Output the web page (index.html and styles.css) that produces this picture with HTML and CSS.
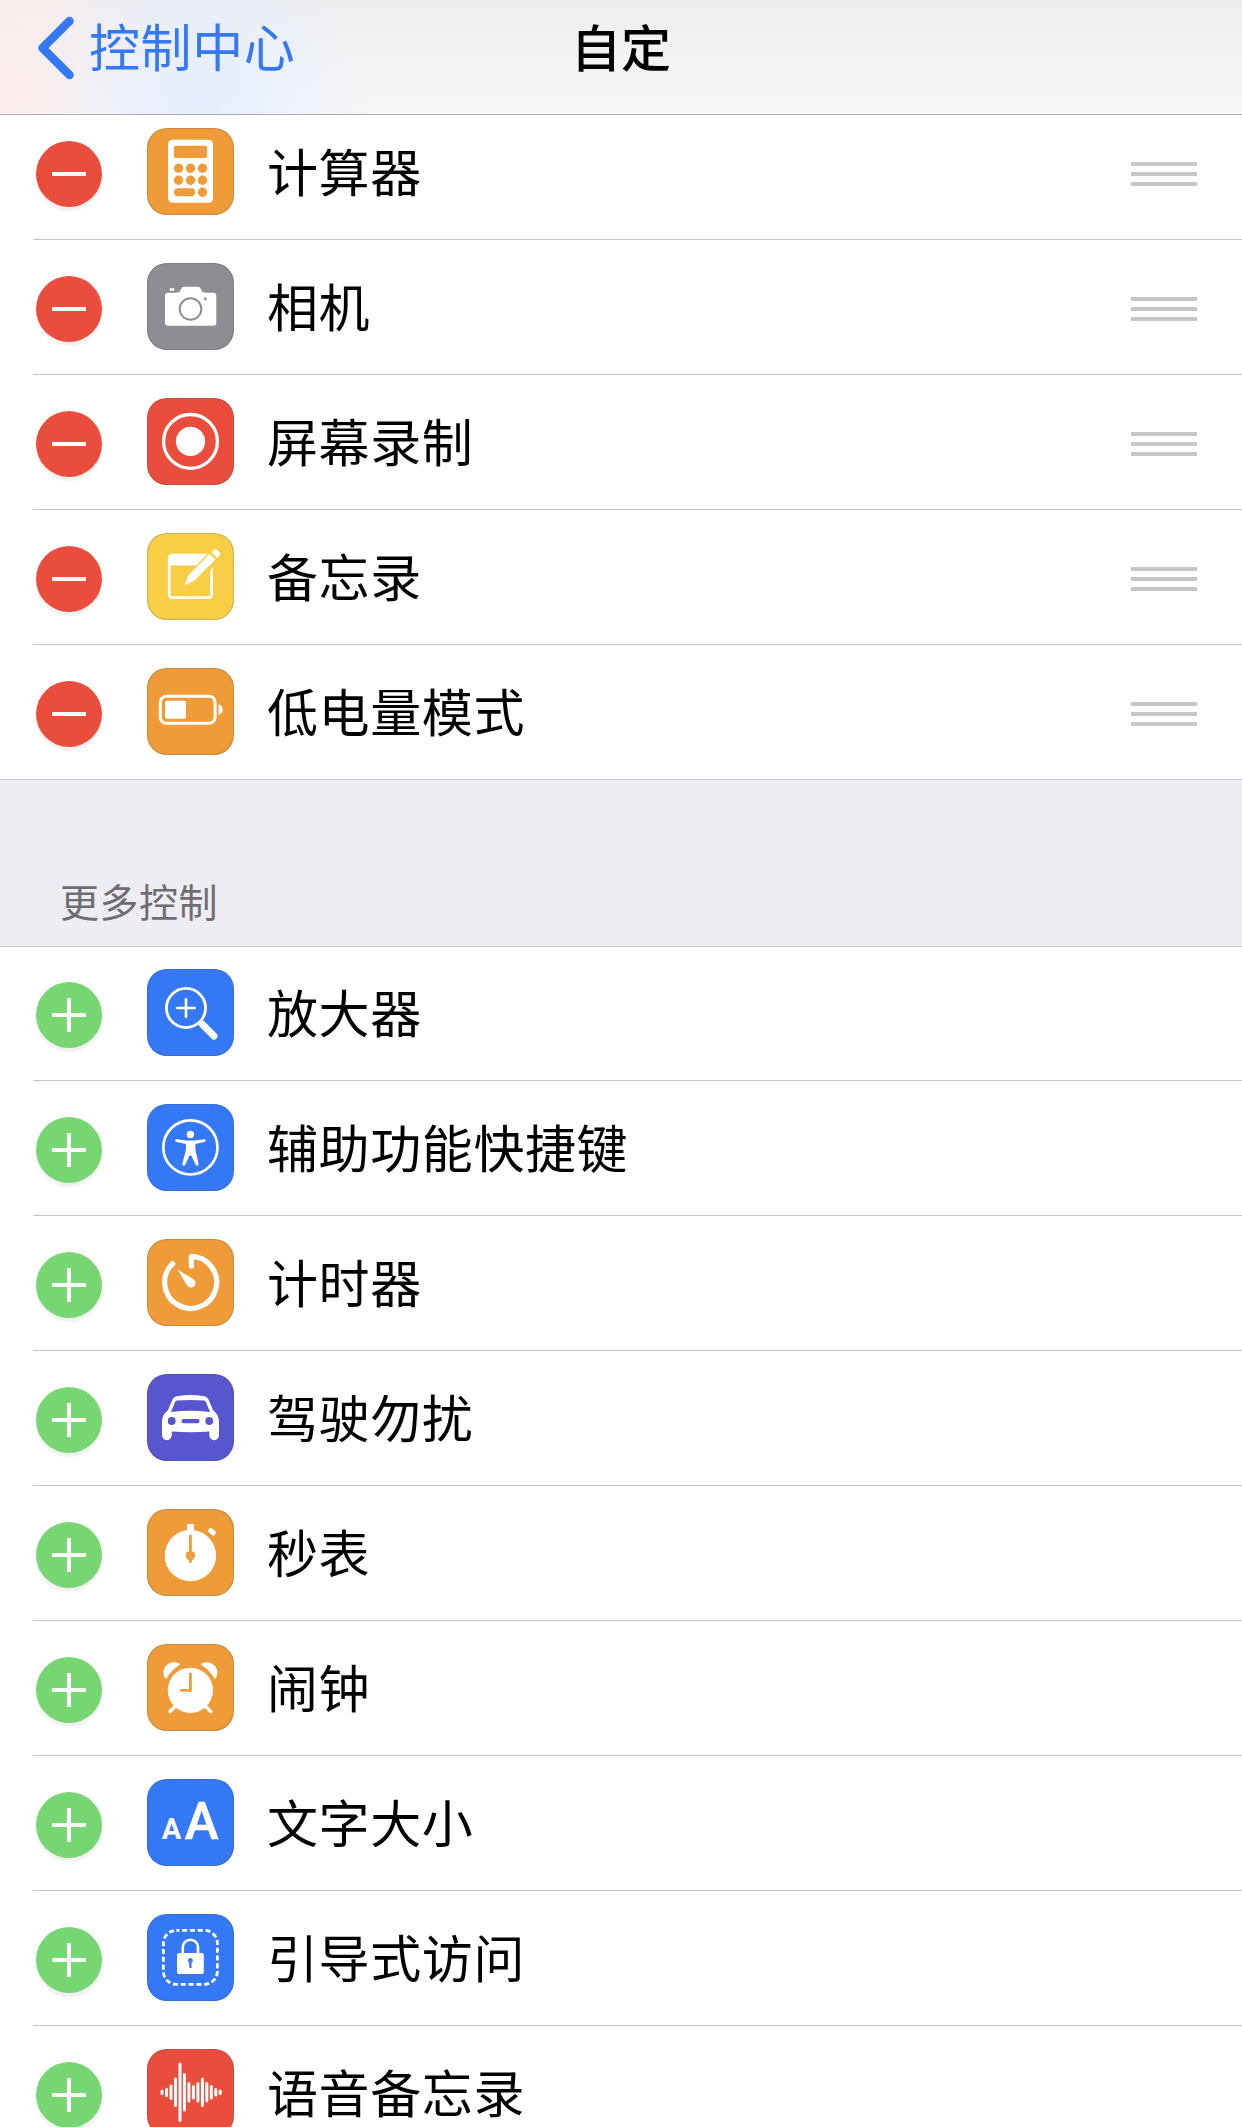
FILE: index.html
```html
<!DOCTYPE html>
<html lang="zh-CN">
<head>
  <meta charset="UTF-8">
  <meta name="viewport" content="width=device-width, initial-scale=1.0">
  <title>自定</title>
  <link rel="stylesheet" href="styles.css">
</head>
<body>
  <div class="screen">
    <header class="navbar">
      <div class="back">
        <svg class="chevron" viewBox="0 0 40 66"><path d="M33.500 6L6.500 33l27 27"/></svg>
        <span>控制中心</span>
      </div>
      <h1 class="title">自定</h1>
    </header>

    <!-- 已添加的控制 -->
    <ul class="list included">
      <li class="row">
        <span class="badge remove"></span>
        <svg class="icon orange" viewBox="0 0 87 87">
          <rect x="21" y="11.7" width="45" height="63" rx="4.5" fill="#fff"/>
          <g fill="#ee9b38">
            <rect x="27" y="17.7" width="33" height="12.3" rx="1.5"/>
            <circle cx="31.5" cy="40.2" r="4.7"/><circle cx="43.5" cy="40.2" r="4.7"/><circle cx="55.5" cy="40.2" r="4.7"/>
            <circle cx="31.5" cy="52.2" r="4.7"/><circle cx="43.5" cy="52.2" r="4.7"/><circle cx="55.5" cy="52.2" r="4.7"/>
            <rect x="27" y="60.2" width="21" height="8" rx="4"/><circle cx="55.5" cy="64.2" r="4.7"/>
          </g>
        </svg>
        <span class="name">计算器</span>
        <span class="drag"></span>
      </li>
      <li class="row">
        <span class="badge remove"></span>
        <svg class="icon gray" viewBox="0 0 87 87">
          <path fill="#fff" d="M21 29.7h8c3 0 4-1 5-3.500 .8-1.800 1.500-2.500 3.500-2.500h13c2 0 2.700.7 3.500 2.500 1 2.500 2 3.500 5 3.500h7.300a3 3 0 0 1 3 3v27a3 3 0 0 1-3 3H21a3 3 0 0 1-3-3v-27a3 3 0 0 1 3-3z"/>
          <rect x="22.700" y="25.300" width="4.500" height="2.400" rx=".8" fill="#fff"/>
          <circle cx="43.500" cy="46" r="10.800" fill="none" stroke="#8e8d93" stroke-width="2"/>
          <circle cx="58.300" cy="35.700" r="1.500" fill="#8e8d93"/>
        </svg>
        <span class="name">相机</span>
        <span class="drag"></span>
      </li>
      <li class="row">
        <span class="badge remove"></span>
        <svg class="icon red" viewBox="0 0 87 87">
          <circle cx="43.500" cy="43.400" r="26.900" fill="none" stroke="#fff" stroke-width="3.300"/>
          <circle cx="43.500" cy="43.400" r="14.600" fill="#fff"/>
        </svg>
        <span class="name">屏幕录制</span>
        <span class="drag"></span>
      </li>
      <li class="row">
        <span class="badge remove"></span>
        <svg class="icon yellow" viewBox="0 0 87 87">
          <rect x="22.200" y="22.200" width="42.400" height="42.400" rx="3" fill="none" stroke="#fff" stroke-width="2.700"/>
          <path d="M22.200 22.200h41v10.400h-41z" fill="#fff"/>
          <path d="M42.300 43L66 19.300l4-4 6 6-4 4L48.500 48z" fill="#f7ce46" stroke="#f7ce46" stroke-width="5"/>
          <path d="M37.200 52.300l4.600-10.300 20.900-20.900 5.600 5.600L47.500 47.600z" fill="#fff"/>
          <path d="M64.500 19.300l2.600-2.600a2 2 0 0 1 2.800 0l2.800 2.800a2 2 0 0 1 0 2.800l-2.600 2.600z" fill="#fff"/>
        </svg>
        <span class="name">备忘录</span>
        <span class="drag"></span>
      </li>
      <li class="row">
        <span class="badge remove"></span>
        <svg class="icon orange" viewBox="0 0 87 87">
          <rect x="13.300" y="28.200" width="54.800" height="27" rx="6" fill="none" stroke="#fff" stroke-width="3"/>
          <rect x="18" y="32.700" width="21" height="18" rx="2" fill="#fff"/>
          <path d="M71.500 36.300c5.600 1 5.600 9.400 0 10.400z" fill="#fff"/>
        </svg>
        <span class="name">低电量模式</span>
        <span class="drag"></span>
      </li>
    </ul>

    <h2 class="section-title">更多控制</h2>

    <!-- 可添加的控制 -->
    <ul class="list more">
      <li class="row">
        <span class="badge add"></span>
        <svg class="icon blue" viewBox="0 0 87 87">
          <g fill="none" stroke="#fff">
            <circle cx="39" cy="39" r="19.600" stroke-width="2.800"/>
            <path d="M30.300 39h17.400M39 30.300v17.400" stroke-width="2.700" stroke-linecap="round"/>
            <path d="M53 53l1.500 1.500" stroke-width="5.500"/>
            <path d="M55.500 55.500l11.500 11.500" stroke-width="7" stroke-linecap="round"/>
          </g>
        </svg>
        <span class="name">放大器</span>
      </li>
      <li class="row">
        <span class="badge add"></span>
        <svg class="icon blue" viewBox="0 0 87 87">
          <circle cx="43.400" cy="43.400" r="27.100" fill="none" stroke="#fff" stroke-width="2.700"/>
          <circle cx="43.400" cy="30.500" r="3.700" fill="#fff"/>
          <path fill="#fff" d="M30 35.300l9 1.200h9l9-1.200c2-.3 2.400 2.200.4 2.700l-9 1.900v6.200l3.200 13.700c.4 2-2.500 2.700-3.100.8L44.300 51.500h-1.800l-4.100 9.100c-.8 1.900-3.600 1.200-3.100-.8L38.900 46v-6.100l-9.400-1.900c-2-.5-1.500-3 .5-2.700z"/>
        </svg>
        <span class="name">辅助功能快捷键</span>
      </li>
      <li class="row">
        <span class="badge add"></span>
        <svg class="icon orange" viewBox="0 0 87 87">
          <path d="M25.700 24.600A26 26 0 1 0 44.400 17.400V27" fill="none" stroke="#fff" stroke-width="5.200" stroke-linecap="round" stroke-linejoin="round"/>
          <path d="M30.300 30.300l16.200 9.900a4.600 4.600 0 1 1-6.400 6.400z" fill="#fff"/>
        </svg>
        <span class="name">计时器</span>
      </li>
      <li class="row">
        <span class="badge add"></span>
        <svg class="icon purple" viewBox="0 0 87 87">
          <path fill="#fff" fill-rule="evenodd" d="M31 22q12.500-2 25 0c3.500.5 5 2 6.200 5l4 9.500c4.500 3.500 5.800 7 5.800 12v12.800a4.800 4.800 0 0 1-9.700 0v-3.800q-19 1.300-37.600 0v3.800a4.800 4.800 0 0 1-9.700 0V48.500c0-5 1.300-8.500 5.800-12l4-9.500c1.200-3 2.700-4.500 6.200-5zM30 26.600c-1.300.3-1.800 1-2.300 2.300L24 38q19.500-2.500 39 0l-3.700-9.100c-.5-1.300-1-2-2.300-2.300q-13.500-1.200-27 0z"/>
          <circle cx="24.700" cy="47" r="3.900" fill="#5756ce"/><circle cx="62.300" cy="47" r="3.900" fill="#5756ce"/>
          <rect x="34.500" y="45" width="18" height="4.300" rx="2.100" fill="#5756ce"/>
        </svg>
        <span class="name">驾驶勿扰</span>
      </li>
      <li class="row">
        <span class="badge add"></span>
        <svg class="icon orange" viewBox="0 0 87 87">
          <circle cx="43.400" cy="46.600" r="25.700" fill="#fff"/>
          <rect x="39.900" y="15" width="7.200" height="9" rx=".8" fill="#fff"/>
          <rect x="61" y="20.200" width="8" height="5" rx="1.500" fill="#fff" transform="rotate(42 65 22.700)"/>
          <path d="M43.400 27v25.500" stroke="#ee9b38" stroke-width="2.800" stroke-linecap="round"/>
          <circle cx="43.400" cy="46.600" r="4.700" fill="#ee9b38"/>
        </svg>
        <span class="name">秒表</span>
      </li>
      <li class="row">
        <span class="badge add"></span>
        <svg class="icon orange" viewBox="0 0 87 87">
          <circle cx="43.400" cy="46.300" r="22.600" fill="#fff"/>
          <path d="M43.400 28.700v17.600H33.300" fill="none" stroke="#ee9b38" stroke-width="2.800"/>
          <path d="M33.300 20.200C25 14.500 13.500 22.500 17 32q1 3 2.200 2.600Q24.500 25.800 33.300 20.200zM53.500 20.200C61.800 14.500 73.300 22.500 69.800 32q-1 3-2.200 2.600Q62.300 25.800 53.500 20.200z" fill="#fff"/>
          <path d="M28 62.500l-5 5M58.800 62.500l5 5" stroke="#fff" stroke-width="3.300" stroke-linecap="round"/>
        </svg>
        <span class="name">闹钟</span>
      </li>
      <li class="row">
        <span class="badge add"></span>
        <svg class="icon blue" viewBox="0 0 87 87">
          <text class="letter-small" x="14.800" y="60">A</text>
          <text class="letter-large" x="37.700" y="60">A</text>
        </svg>
        <span class="name">文字大小</span>
      </li>
      <li class="row">
        <span class="badge add"></span>
        <svg class="icon blue" viewBox="0 0 87 87">
          <rect x="16.400" y="16.300" width="54" height="54" rx="13" fill="none" stroke="#fff" stroke-width="2.800" stroke-dasharray="5.100 2.720" stroke-dashoffset="2.100"/>
          <rect x="30" y="39" width="26.800" height="21" rx="2" fill="#fff"/>
          <path d="M35.800 40v-6.700a7.600 7.600 0 0 1 15.200 0V40" fill="none" stroke="#fff" stroke-width="2.600"/>
          <circle cx="43.400" cy="46.500" r="2.400" fill="#3478f6"/>
          <path d="M43.400 47v6" stroke="#3478f6" stroke-width="2.400" stroke-linecap="round"/>
        </svg>
        <span class="name">引导式访问</span>
      </li>
      <li class="row">
        <span class="badge add"></span>
        <svg class="icon red" viewBox="0 0 87 87">
          <path d="M15 42v2.600M19.500 40.200v6.200M24 37v12.600M28.500 30v26.600M33 15v56.600M37.400 25.500v35.600M41.900 34.500v17.600M46.400 37.500v11.600M50.900 34.500v17.600M55.400 30v26.600M59.800 34.500v17.600M64.300 37.500v11.600M68.800 40.500v5.600M73.200 42v2.600" stroke="#fff" stroke-width="3" stroke-linecap="round"/>
        </svg>
        <span class="name">语音备忘录</span>
      </li>
    </ul>
  </div>
</body>
</html>
```
FILE: styles.css
```css
* {
  box-sizing: border-box;
}
body {
  margin: 0;
  background-color: #fff;
  font-family: "Noto Sans CJK SC", sans-serif;
}
.screen {
  width: 1242px;
  height: 2127px;
  overflow: hidden;
}

/* 导航栏 */
.navbar {
  height: 115px;
  display: grid;
  grid-template-columns: 1fr auto 1fr;
  align-items: start;
  padding: 12px 36px 0;
  border-bottom: 1px solid #b0b0b2;
  background:
    radial-gradient(ellipse 170px 190px at 200px 100px, rgba(227, 237, 255, 0.9), rgba(227, 237, 255, 0)),
    radial-gradient(ellipse 210px 240px at 0 90px, rgba(252, 236, 234, 0.9), rgba(252, 236, 234, 0)),
    linear-gradient(#eeeeef, #f7f7f8);
}
.back {
  display: flex;
  align-items: flex-start;
  gap: 13px;
  color: #3478f6;
  font-size: 51px;
  line-height: 66px;
  letter-spacing: 0.6px;
}
.chevron {
  width: 40px;
  height: 66px;
  margin-top: 3px;
  fill: none;
  stroke: #3478f6;
  stroke-width: 8.5;
  stroke-linecap: round;
  stroke-linejoin: round;
}
.title {
  margin: 0;
  font-size: 50px;
  font-weight: 500;
  line-height: 66px;
}

/* 列表 */
.list {
  list-style: none;
  margin: 0;
  padding: 0;
}
.row {
  height: 135px;
  margin-left: 33px;
  padding: 0 45px 24px 3px;
  display: flex;
  align-items: flex-end;
  border-bottom: 1px solid #c4c3c7;
}
.included .row:first-child {
  height: 125px;
}
.included .row:last-child {
  height: 134px;
  border-bottom: none;
}
.more .row:first-child {
  height: 134px;
}
.badge {
  width: 66px;
  height: 66px;
  margin-bottom: 8px;
  border-radius: 50%;
  box-shadow: 0 4px 2px rgba(0, 0, 0, 0.06);
  background-repeat: no-repeat;
  background-position: center;
}
.remove {
  background-color: #eb4d3d;
  background-image: linear-gradient(#fff, #fff);
  background-size: 34px 4px;
}
.add {
  background-color: #76d672;
  background-image: linear-gradient(#fff, #fff), linear-gradient(#fff, #fff);
  background-size: 34px 4px, 4px 34px;
}
.icon {
  width: 87px;
  height: 87px;
  margin-left: 45px;
  border-radius: 20px;
  box-shadow: inset 0 0 0 1px rgba(70, 70, 90, 0.22);
}
.orange {
  background-color: #ee9b38;
}
.gray {
  background-color: #8e8d93;
}
.red {
  background-color: #eb4d3d;
}
.yellow {
  background-color: #f7ce46;
}
.blue {
  background-color: #3478f6;
}
.purple {
  background-color: #5756ce;
}
.letter-small, .letter-large {
  font-family: Roboto, sans-serif;
  fill: #fff;
}
.letter-small {
  font-size: 29px;
  font-weight: 700;
}
.letter-large {
  font-size: 51px;
  font-weight: 500;
  stroke: #fff;
  stroke-width: 0.6px;
}
.name {
  flex: 1;
  margin-left: 33px;
  margin-bottom: 12px;
  font-size: 51px;
  line-height: 66px;
  letter-spacing: 0.6px;
  color: #000;
}
.drag {
  width: 66px;
  height: 24px;
  margin-bottom: 29px;
  background: repeating-linear-gradient(#c6c6c8 0 4px, transparent 4px 10px);
}

/* 分组标题 */
.section-title {
  height: 168px;
  margin: 0;
  padding: 95px 60px 0;
  border-top: 1px solid #c4c3c7;
  border-bottom: 1px solid #c4c3c7;
  background-color: #eeedf3;
  color: #6d6d72;
  font-size: 39px;
  font-weight: 400;
  line-height: 50px;
  letter-spacing: 0.5px;
}
```
